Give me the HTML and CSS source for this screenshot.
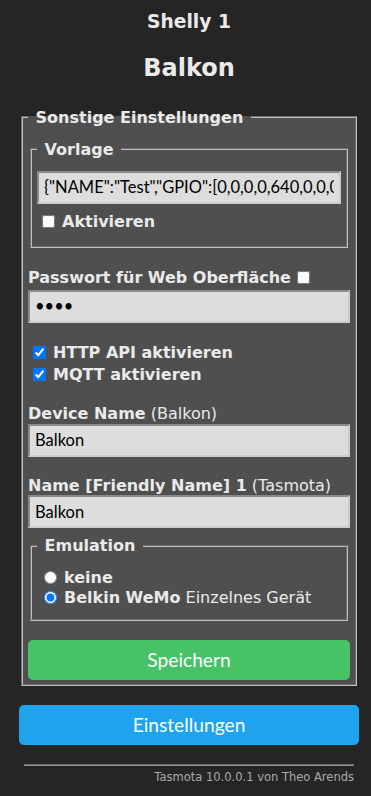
FILE: index.html
```html
<!DOCTYPE html>
<html lang="de">
<head>
  <meta charset="UTF-8">
  <meta name="viewport" content="width=device-width, initial-scale=1.0">
  <title>Balkon - Sonstige Einstellungen</title>
  <link rel="stylesheet" href="styles.css">
</head>
<body>
  <div class="page">
    <div class="head">
      <h3>Shelly 1</h3>
      <h2>Balkon</h2>
    </div>

    <fieldset class="box">
      <legend>&nbsp;Sonstige Einstellungen&nbsp;</legend>
      <form class="form">
        <fieldset class="sub tpl">
          <legend>&nbsp;Vorlage&nbsp;</legend>
          <input class="field" placeholder="Vorlage" value='{"NAME":"Test","GPIO":[0,0,0,0,640,0,0,0,0,0,0,0,0,0],"FLAG":0,"BASE":18}'>
          <label class="check"><input type="checkbox"><b>Aktivieren</b></label>
        </fieldset>

        <label class="pass-label"><b>Passwort für Web Oberfläche</b><input type="checkbox"></label>
        <input class="field pass" type="password" value="****">

        <label class="check http"><input type="checkbox" checked><b>HTTP API aktivieren</b></label>
        <label class="check"><input type="checkbox" checked><b>MQTT aktivieren</b></label>

        <label class="name-label dev"><b>Device Name</b> (Balkon)</label>
        <input class="field" value="Balkon">

        <label class="name-label friendly"><b>Name [Friendly Name] 1</b> (Tasmota)</label>
        <input class="field" value="Balkon">

        <fieldset class="sub emu">
          <legend>&nbsp;Emulation&nbsp;</legend>
          <label class="radio first"><input type="radio" name="emu"><b>keine</b></label>
          <label class="radio"><input type="radio" name="emu" checked><b>Belkin WeMo</b>&nbsp;Einzelnes Gerät</label>
        </fieldset>

        <button type="button" class="btn green">Speichern</button>
      </form>
    </fieldset>

    <button type="button" class="btn blue">Einstellungen</button>

    <div class="foot">
      <hr>
      <div class="credit">Tasmota 10.0.0.1 von Theo Arends</div>
    </div>
  </div>
</body>
</html>
```

FILE: styles.css
```css
body {
  margin: 0;
  background: #252525;
  color: #eaeaea;
  font-family: "DejaVu Sans", Verdana, sans-serif;
  font-size: 16px;
}

.page {
  width: 340px;
  margin-left: 19px;
  padding-top: 11px;
}

.head {
  text-align: center;
}

.head h3 {
  margin: 0;
  font-size: 18.7px;
  line-height: 22px;
}

.head h2 {
  margin: 21px 0 0;
  font-size: 24px;
  line-height: 28px;
}

fieldset {
  margin: 0 2px;
  padding: 5px 5px 5px;
  border: 2px groove #c0c0c0;
  background: #4f4f4f;
  min-width: 0;
}

legend {
  font-weight: bold;
  line-height: 19px;
  padding: 0 2px;
}

.box {
  margin-top: 25.5px;
  padding-bottom: 4px;
}

.form {
  display: flex;
  flex-direction: column;
}

.sub {
  display: flex;
  flex-direction: column;
}

.tpl {
  margin-top: 8px;
}

.tpl .field {
  margin-top: 7px;
}

.tpl .check {
  height: 19px;
  margin: 8.5px 0 9.5px;
}

.field {
  display: block;
  width: 100%;
  height: 33px;
  box-sizing: border-box;
  padding: 5px;
  border: 2px solid;
  border-color: #8a8a8a #cdcdcd #cdcdcd #8a8a8a;
  background: #dddddd;
  color: #000;
  font-family: Lato, "Liberation Sans", sans-serif;
  font-size: 16.5px;
}

.check {
  display: flex;
  align-items: center;
  height: 22px;
}

.check input {
  width: 13px;
  height: 13px;
  margin: 0 7px 0 5px;
}

.http {
  margin-top: 19px;
}

.pass-label {
  display: flex;
  align-items: center;
  height: 19px;
  margin-top: 20.5px;
}

.pass-label input {
  width: 13px;
  height: 13px;
  margin: 0 0 0 6px;
}

.pass {
  margin-top: 2.5px;
}

.name-label {
  line-height: 19px;
}

.dev {
  margin-top: 18.5px;
  margin-bottom: 0.5px;
}

.friendly {
  margin-top: 19.5px;
}

.emu {
  margin-top: 8px;
}

.radio {
  display: flex;
  align-items: center;
  height: 20px;
}

.radio.first {
  margin-top: 7.5px;
}

.radio:last-child {
  margin-bottom: 6px;
}

.radio input {
  width: 13px;
  height: 13px;
  margin: 0 7px 0 7px;
}

.btn {
  display: block;
  width: 100%;
  height: 40px;
  border: 0;
  border-radius: 0.3rem;
  color: #faffff;
  font-family: Lato, "Liberation Sans", sans-serif;
  font-size: 19.2px;
  cursor: pointer;
}

.green {
  margin-top: 19px;
  background: #47c266;
}

.blue {
  margin-top: 19px;
  background: #1fa3ec;
}

.foot {
  padding: 0 5px;
  text-align: right;
}

.foot hr {
  margin: 19px 0 0;
  border: 0;
  border-top: 1px solid #6e6e6e;
  border-bottom: 1px solid #8e8e8e;
}

.credit {
  margin-top: 5.5px;
  font-size: 11.5px;
  line-height: 13px;
  color: #aaa;
}
```
